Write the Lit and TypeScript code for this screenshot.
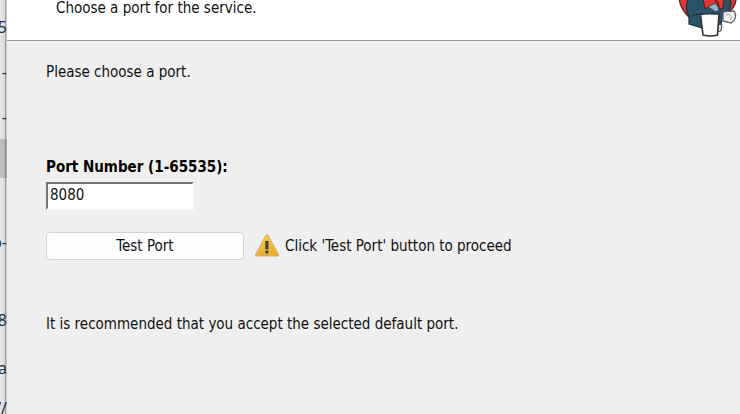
import { LitElement, html, css } from "lit";
import { customElement, state } from "lit/decorators.js";

@customElement("warning-icon")
class WarningIcon extends LitElement {
  static styles = css`
    :host { display: block; flex: none; }
    svg { display: block; }
  `;
  render() {
    return html`<svg width="24" height="24" viewBox="0 0 24 24" aria-hidden="true">
      <defs>
        <linearGradient id="g" x1="0" y1="0" x2="0" y2="1">
          <stop offset="0" stop-color="#f3cf3c" />
          <stop offset="1" stop-color="#e8ac35" />
        </linearGradient>
      </defs>
      <path d="M11 1H13L23.4 20.5V22H.6V20.5Z" fill="url(#g)" stroke="#dfa860" stroke-width="1" stroke-linejoin="round" />
      <path d="M10.2 7h3.4l-.2 8.200h-3Z" fill="#3f3f35" />
      <rect x="10.4" y="16.500" width="3" height="3" rx=".6" fill="#3f3f35" />
    </svg>`;
  }
}

@customElement("butler-logo")
class ButlerLogo extends LitElement {
  static styles = css`
    :host { display: block; flex: none; }
    svg { display: block; }
  `;
  render() {
    return html`<svg width="66" height="40" viewBox="0 0 66 40" role="img" aria-label="Butler">
      <path d="M5 -2C6 7 10 13 17 19L28 14 52 14C59 10 62 4 62 -2Z" fill="#dc3834" stroke="#5a3034" stroke-width="1.5" />
      <path d="M15 -2C11 5 12 11 15 16L15 24 28 28 46 29 49 14 54 12C58 7 57 2 56 -2Z" fill="#2c5268" stroke="#1c3040" stroke-width="1.2" />
      <path d="M17 16C22 16 24 13 27 14" fill="none" stroke="#1c3040" />
      <path d="M29 -2 31 9 36 6 42 11 49 8 50 -2Z" fill="#dc3834" stroke="#3a2426" />
      <path d="M34 7 41 3 46 9 42 12Z" fill="#8fb6cc" stroke="#2c4250" />
      <path d="M41 0 44 3 45 9" fill="none" stroke="#3a2426" stroke-width="1.4" />
      <path d="M44 24 48 25 47 31 43 32Z" fill="#ddd" stroke="#494949" />
      <path d="M26.500 14.500C33 13 40 14 45 14L43.500 35C38 36.500 34 36.500 29 35Z" fill="#fdfdfd" stroke="#303235" stroke-width="1.6" />
      <path d="M49 13C51 10 56 12 60 11 63 15 62 20 57 23L49 21Z" fill="#f1f1f1" stroke="#666" stroke-width="1.3" />
      <path d="M52 15C56 13 59 17 56 20" fill="none" stroke="#999" />
    </svg>`;
  }
}

@customElement("app-root")
class AppRoot extends LitElement {
  static styles = css`
    :host {
      display: grid;
      grid-template-columns: 7px minmax(0, 1fr);
      min-height: 100vh;
      background: #efefef;
      color: #111;
      font: 15px/20px "DejaVu Sans Condensed", "DejaVu Sans", sans-serif;
    }
    .behind {
      height: 100vh;
      background: linear-gradient(to right, #e8e8e8, #d8d8d8 5px, #a2a2a2 5px, #a2a2a2 6px, #c8c8c8 6px);
      overflow: hidden;
      font: 16px/20px "Noto Sans", sans-serif;
      color: #26304a;
    }
    .line {
      display: flex;
      flex-direction: column;
      align-items: flex-end;
      justify-content: center;
      height: 45px;
    }
    .first { padding-top: 4px; }
    .last { padding-top: 8px; }
    .selected { height: 39px; background: rgba(0, 0, 0, 0.16); }
    .tall { height: 78px; }
    .short { height: 18px; }
    .gap { height: 25px; }
    header {
      display: flex;
      justify-content: space-between;
      height: 40px;
      padding-left: 49px;
      background: #fff;
      border-bottom: 1px solid #999;
    }
    p { margin: 0; }
    .sub { line-height: 16px; }
    main { padding: 21px 39px; }
    .label {
      display: block;
      margin-top: 75px;
      font-weight: bold;
      color: #000;
    }
    input {
      display: block;
      box-sizing: border-box;
      width: 148px;
      height: 28px;
      margin-top: 5px;
      padding: 0 2px 2px;
      border: 2px solid;
      border-color: #757575 #fafafa #fafafa #757575;
      background: #fff;
      color: inherit;
      font: inherit;
      outline: none;
    }
    .row { display: flex; align-items: center; gap: 11px; margin-top: 22px; }
    .status { display: flex; align-items: center; gap: 6px; }
    button {
      width: 198px;
      height: 28px;
      padding: 0;
      border: 1px solid #d4d4d4;
      border-radius: 4px;
      background: #fdfdfd;
      color: inherit;
      font: inherit;
    }
    .note { margin-top: 54px; }
  `;
  @state() private port = "8080";
  render() {
    return html`
      <div class="behind">
        <div class="line first">5</div>
        <div class="line">-</div>
        <div class="line">-</div>
        <div class="line selected"></div>
        <div class="gap"></div>
        <div class="line tall">o-</div>
        <div class="line tall">8</div>
        <div class="line short">na</div>
        <div class="line last">V/</div>
      </div>
      <div class="dialog">
        <header>
          <p class="sub">Choose a port for the service.</p>
          <butler-logo></butler-logo>
        </header>
        <main>
          <p>Please choose a port.</p>
          <label class="label" for="port">Port Number (1-65535):</label>
          <input id="port" type="text" .value=${this.port} />
          <div class="row">
            <button type="button">Test Port</button>
            <div class="status"><warning-icon></warning-icon><span>Click 'Test Port' button to proceed</span></div>
          </div>
          <p class="note">It is recommended that you accept the selected default port.</p>
        </main>
      </div>
    `;
  }
}
